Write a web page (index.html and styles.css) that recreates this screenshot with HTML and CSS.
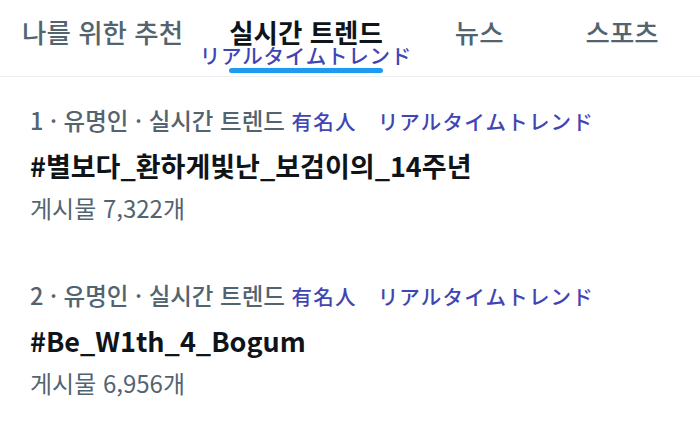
FILE: index.html
```html
<!DOCTYPE html>
<html lang="ko">
<head>
  <meta charset="UTF-8" />
  <meta name="viewport" content="width=device-width, initial-scale=1.0"/>
  <link rel="stylesheet" href="styles.css">
  <title>트렌드</title>
</head>
<body>
  <nav class="tabs">
    <div class="tab tab-foryou">나를 위한 추천</div>
    <div class="tab tab-trend active">
      실시간 트렌드
      <span class="tr">リアルタイムトレンド</span>
      <span class="bar"></span>
    </div>
    <div class="tab tab-news">뉴스</div>
    <div class="tab tab-sports">스포츠</div>
  </nav>

  <ul class="trends">
    <li class="trend">
      <div class="meta">1 · 유명인 · 실시간 트렌드 <span class="jp">有名人</span><span class="jp jp-gap">リアルタイムトレンド</span></div>
      <div class="tag">#별보다_환하게빛난_보검이의_14주년</div>
      <div class="count">게시물 7,322개</div>
    </li>
    <li class="trend">
      <div class="meta">2 · 유명인 · 실시간 트렌드 <span class="jp">有名人</span><span class="jp jp-gap">リアルタイムトレンド</span></div>
      <div class="tag">#Be_W1th_4_Bogum</div>
      <div class="count">게시물 6,956개</div>
    </li>
  </ul>
</body>
</html>
```

FILE: styles.css
```css
body {
  margin: 0;
  background: #fff;
  font-family: "Noto Sans CJK KR", "Noto Sans", sans-serif;
  color: #0f1419;
}

.tabs {
  display: flex;
  height: 76px;
  padding-left: 22px;
  border-bottom: 1px solid #eceff1;
}

.tab {
  position: relative;
  padding-top: 14px;
  font-size: 26.5px;
  line-height: 36px;
  font-weight: 500;
  color: #536471;
  white-space: nowrap;
}

.tab-trend { margin-left: 46px; }
.tab-news { margin-left: 72px; }
.tab-sports { margin-left: 82px; }

.tab.active {
  color: #0f1419;
  font-weight: 700;
}

.tab .tr {
  position: absolute;
  left: 50%;
  top: 42px;
  transform: translateX(-50%);
  font-family: "Noto Sans CJK JP", sans-serif;
  font-size: 20.5px;
  line-height: 26px;
  font-weight: 500;
  letter-spacing: 0.8px;
  color: #3f46b4;
}

.tab .bar {
  position: absolute;
  left: 0;
  right: 0;
  bottom: 3px;
  height: 5px;
  border-radius: 3px;
  background: #1d9bf0;
}

.trends {
  list-style: none;
  margin: 0;
  padding: 0;
}

.trend {
  padding: 27px 30px 0;
}

.trend + .trend {
  padding-top: 55px;
}

.meta {
  font-size: 23.5px;
  line-height: 32px;
  font-weight: 500;
  color: #536471;
  white-space: nowrap;
}

.jp {
  font-family: "Noto Sans CJK JP", sans-serif;
  font-size: 20.5px;
  letter-spacing: 1.2px;
  color: #3f46b4;
}

.jp-gap { margin-left: 21px; }

.tag {
  margin-top: 10px;
  font-size: 27px;
  line-height: 38px;
  font-weight: 700;
}

.count {
  margin-top: 7px;
  font-size: 24px;
  line-height: 32px;
  color: #536471;
}
```
